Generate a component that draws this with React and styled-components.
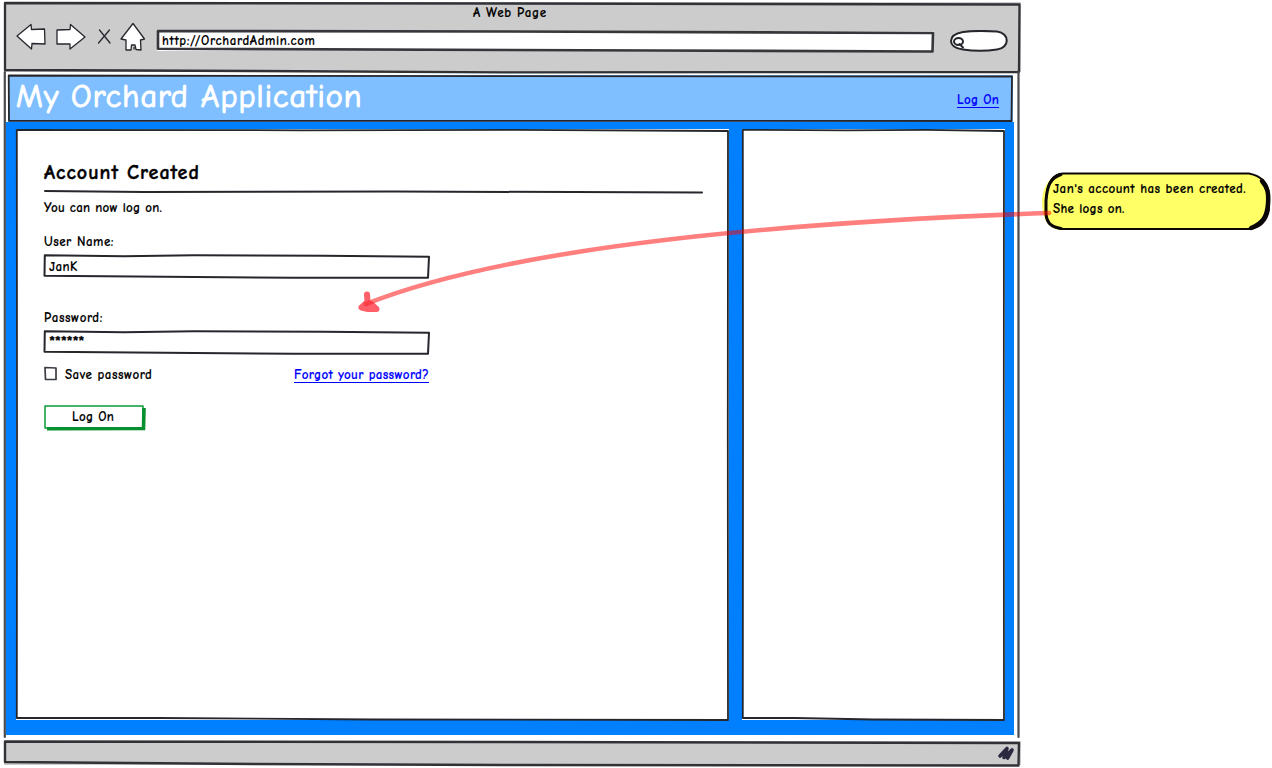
import React from "react";
import styled, { createGlobalStyle } from "styled-components";

const Global = createGlobalStyle`
  * { box-sizing: border-box; }
  html, body { margin: 0; padding: 0; background: #fff; }
  body { width: 1272px; height: 768px; overflow: hidden; color: #000;
    font: 500 13px/16px "Comic Sans MS", "Comic Neue", Lato, "Open Sans", sans-serif; }
`;

const Page = styled.div`
  position: relative;
  display: flex;
  align-items: flex-start;
  gap: 22px;
  width: 1272px;
  height: 768px;
  padding: 2px 0 0 4px;
`;

const Window = styled.main`
  position: relative;
  display: flex;
  flex-direction: column;
  flex: none;
  width: 1017px;
  height: 766px;
`;

const Ink = styled.svg`
  position: absolute;
  left: 0;
  top: 0;
  width: 100%;
  height: 100%;
  overflow: visible;
  pointer-events: none;
  fill: none;
  stroke: ${(p) => p.$color || "#25272c"};
  stroke-width: ${(p) => p.$weight || 2};
  stroke-linejoin: round;
  stroke-linecap: round;
`;

const Label = styled.span`
  display: block;
  width: max-content;
  white-space: pre;
  font-size: ${(p) => p.$size || 13}px;
  line-height: ${(p) => p.$line || 16}px;
  letter-spacing: ${(p) => p.$track || 0}px;
  font-weight: ${(p) => p.$bold || 600};
  color: ${(p) => p.$color || "#000"};
  -webkit-text-stroke: ${(p) => p.$stroke || 0.12}px currentColor;
`;

const Link = styled(Label).attrs({ as: "a", href: "#" })`
  color: #0000ff;
  text-decoration: none;
  border-bottom: 1px solid #0000ff;
  line-height: 14px;
`;

const Chrome = styled.header`
  position: relative;
  display: flex;
  flex-direction: column;
  height: 70px;
  background: #ccc;
`;

const TitleRow = styled.div`
  display: flex;
  padding: 3px 0 0 469px;
  height: 19px;
`;

const Toolbar = styled.div`
  display: flex;
  align-items: flex-start;
  height: 40px;
  padding-left: 12px;
`;

const NavIcons = styled.svg`
  flex: none;
  width: 130px;
  height: 32px;
  margin-right: 11px;
  fill: #fff;
  stroke: #25272c;
  stroke-width: 1.3;
  stroke-linejoin: round;
  stroke-linecap: round;
`;

const Address = styled.div`
  position: relative;
  flex: none;
  width: 777px;
  height: 20px;
  margin: 10px 15px 0 0;
  padding: 2px 0 0 5px;
  background: #fff;
`;

const SearchPill = styled.svg`
  flex: none;
  width: 60px;
  height: 22px;
  margin-top: 9px;
  fill: #fff;
  stroke: #25272c;
  stroke-width: 2;
  stroke-linecap: round;
`;

const Body = styled.section`
  position: relative;
  display: flex;
  flex-direction: column;
  height: 669px;
  padding: 3px 0 0 2px;
`;

const Banner = styled.div`
  position: relative;
  display: flex;
  justify-content: space-between;
  width: 1005px;
  height: 47px;
  margin-left: 2px;
  padding: 0 14px 0 8px;
  background: #80bfff;
`;

const BannerLink = styled.div`
  padding-top: 18px;
`;

const Content = styled.div`
  display: flex;
  gap: 13px;
  width: 1008px;
  height: 613px;
  padding: 7px 10px 16px;
  background: #007fff;
`;

const Panel = styled.div`
  position: relative;
  flex: none;
  width: ${(p) => p.$width}px;
  height: 591px;
  background: #fff;
`;

const MainColumn = styled.div`
  display: flex;
  flex-direction: column;
  align-items: flex-start;
  padding: 32px 0 0 28px;
`;

const Rule = styled.svg`
  width: 660px;
  height: 6px;
  margin: 4px 0 5px;
  fill: none;
  stroke: #25272c;
  stroke-width: 2;
  stroke-linecap: round;
  overflow: visible;
`;

const Field = styled.label`
  display: flex;
  flex-direction: column;
  gap: 5px;
  height: 76px;
`;

const FirstField = styled(Field)`
  margin-top: 18px;
`;

const Input = styled.div`
  position: relative;
  width: 386px;
  height: 24px;
  padding: 4px 0 0 5px;
`;

const Options = styled.div`
  display: flex;
  align-items: flex-start;
  width: 385px;
  height: 38px;
  margin-top: -19px;
`;

const Box = styled.svg`
  flex: none;
  width: 13px;
  height: 14px;
  margin-right: 8px;
  fill: #fff;
  stroke: #3a3c44;
  stroke-width: 1.7;
  stroke-linejoin: round;
  overflow: visible;
`;

const Forgot = styled.div`
  margin: 1px 0 0 auto;
`;

const Button = styled.button`
  position: relative;
  display: flex;
  align-items: flex-start;
  width: 101px;
  height: 25px;
  margin: 0;
  padding: 4px 0 0 28px;
  border: 0;
  background: #fff;
  font: inherit;
  text-align: left;
`;

const Status = styled.footer`
  position: relative;
  height: 24px;
  background: #ccc;
`;

const Note = styled.aside`
  position: relative;
  flex: none;
  width: 227px;
  height: 58px;
  margin-top: 170px;
  padding: 7px 0 0 10px;
`;

const NoteText = styled.div`
  position: relative;
`;

const Pointer = styled(Ink)`
  stroke: #ff0000;
  opacity: 0.5;
`;

const PointerTip = styled(Ink)`
  stroke: #ff2a36;
  opacity: 0.75;
`;

function InputInk() {
  return (
    <Ink $weight={2}>
      <path d="M.8 .2 L80 1.2 L150 .3 L280 .8 L385 1.800 L384 22.800 L250 22.800 L120 21.800 L.5 20.800 Z" />
    </Ink>
  );
}

function PanelInk({ w }) {
  return (
    <Ink $weight={1.8}>
      <path
        d={`M.8 .8 L${w * 0.4} 1.3 L${w * 0.7} .8 L${w - 1} 2 L${w - 1.2} 300 L${w - 1} 591 L${w * 0.5} 590.5 L${w * 0.2} 589 L.8 589 L1 300 Z`}
      />
    </Ink>
  );
}

export default function App() {
  return (
    <>
      <Global />
      <Page>
        <Window>
          <Chrome>
            <TitleRow>
              <Label $track={0.65}>A Web Page</Label>
            </TitleRow>
            <Toolbar>
              <NavIcons viewBox="0 0 130 32">
                <path d="M1 15 L15 3.500 L15.500 8.500 L28.500 8 L29 23 L16 22.500 L15.500 28 Z" />
                <path d="M41 9 L54 8.500 L54.500 3.500 L69 16 L54 28 L54 23 L41 23 Z" />
                <path d="M83.500 9 L94 22 M93.500 9 L82.500 22" />
                <path d="M117 2.500 L128.500 18 L124.500 19 L125 29 L120 28.500 L119 24 L115.500 24 L115 29 L110 29 L110 19 L105 18 Z" />
                <path d="M118 26.500 V28" />
              </NavIcons>
              <Address>
                <Label $track={0.63}>http://OrchardAdmin.com</Label>
                <Ink $weight={2.6} $color="#35373a">
                  <path d="M1 0 L350 .5 L776 2 L775.500 20.500 L500 19.500 L1 17.800 Z" />
                </Ink>
              </Address>
              <SearchPill viewBox="0 0 60 22">
                <path d="M14 2 C25 .5 40 1 48 1.500 C61 3 61 18 48 19.500 C38 21 24 21 14 19.500 C-2 17 -2 5 14 2 Z" />
                <ellipse cx="9.500" cy="11.500" rx="4.500" ry="3.500" />
                <path d="M10.500 14 L14 17.500" />
              </SearchPill>
            </Toolbar>
            <Ink $weight={2.3} $color="#303236">
              <path d="M1 1 L500 1.500 L1015.500 2.500 L1015 70 L500 70.300 L250 69 L1 68 Z" />
            </Ink>
          </Chrome>
          <Body>
            <Banner>
              <Label $size={32} $line={43} $track={1.1} $color="#fff" $stroke={1.1} $bold={500}>
                My Orchard Application
              </Label>
              <BannerLink>
                <Link $track={0.25}>Log On</Link>
              </BannerLink>
              <Ink $weight={1.8}>
                <path d="M.7 .5 L500 1.200 L1004 1.500 L1003.500 46 L1 45.800 Z" />
              </Ink>
            </Banner>
            <Content>
              <Panel $width={713}>
                <MainColumn>
                  <Label $size={20} $line={24} $track={1} $stroke={0.4}>
                    Account Created
                  </Label>
                  <Rule viewBox="0 0 660 6">
                    <path d="M1 2 L100 3 L350 2.500 L658 3.500" />
                  </Rule>
                  <Label $track={0.25}>You can now log on.</Label>
                  <FirstField>
                    <Label $track={0.5}>User Name:</Label>
                    <Input>
                      <Label $track={0.4} $line={15}>JanK</Label>
                      <InputInk />
                    </Input>
                  </FirstField>
                  <Field>
                    <Label $track={0.55}>Password:</Label>
                    <Input>
                      <Label $size={16} $line={14} $track={-0.2} $stroke={0.3}>******</Label>
                      <InputInk />
                    </Input>
                  </Field>
                  <Options>
                    <Box viewBox="0 0 13 14">
                      <path d="M1 .5 L12 1 L12 12.500 L1.500 12.500 Z" />
                    </Box>
                    <Label $track={0.5}>Save password</Label>
                    <Forgot>
                      <Link $track={0.33}>Forgot your password?</Link>
                    </Forgot>
                  </Options>
                  <Button type="button">
                    <Label $track={0.25}>Log On</Label>
                    <Ink $color="#0a9a3a" $weight={1.5}>
                      <path d="M1 1 L99 1 L99 23 L1 23 Z" />
                      <path d="M100 3 L99.500 23.500 L3 23.800" strokeWidth="3.600" strokeLinecap="butt" strokeLinejoin="miter" style={{ stroke: "#06902f", strokeWidth: 3.6 }} />
                    </Ink>
                  </Button>
                </MainColumn>
                <PanelInk w={713} />
              </Panel>
              <Panel $width={263}>
                <PanelInk w={263} />
              </Panel>
            </Content>
            <Ink $color="#4a4b4f" $weight={2.2}>
              <path d="M.8 0 V665 M1014.500 0 V665" />
            </Ink>
          </Body>
          <Status>
            <Ink $weight={2.4} $color="#303236">
              <path d="M1 .5 L500 1 L1015 2 L1014.500 24.500 L500 24 L250 23 L1 21 Z" />
            </Ink>
            <Ink $weight={3.6} $color="#2b2940">
              <path d="M996 15 L1003 7.500 L1000 16.500 L1008 9 L1003.500 17" />
            </Ink>
          </Status>
        </Window>
        <Note>
          <Ink $color="none">
            <path d="M14 2 H208 Q225 5 225 22 V38 Q222 56 205 58 H18 Q3 57 0 40 Q-5 14 14 2 Z" fill="#ffff66" />
          </Ink>
          <Ink $color="#0b0706" $weight={1.8}>
            <path d="M20 1.500 H206 C218 4 225 11 226 22 V38 C224 49 217 56 207 57 H20 C9 56 4 52 3 43 V28 C4 11 9 2 20 1.500 Z" />
          </Ink>
          <Ink $color="#0b0706" $weight={3}>
            <path d="M18 2.500 C7 6 4 14 3 29 V42 C4 52 9 55 18 56.500" />
          </Ink>
          <Ink $color="#0b0706" $weight={4.5}>
            <path d="M219 9 C224 15 226 20 225 32 C224 45 220 51 208 56" />
          </Ink>
          <NoteText>
            <Label $line={19.5} $track={0.45}>Jan's account has been created.</Label>
            <Label $line={19.5} $track={0.3}>She logs on.</Label>
          </NoteText>
        </Note>
        <Pointer viewBox="0 0 1272 768" $weight={4.6}>
          <path d="M1049 213 Q551 230.500 366 304" />
        </Pointer>
        <PointerTip viewBox="0 0 1272 768" $weight={6}>
          <path d="M367 294.500 L367.500 302 L361.500 307.500 L368 309 L376.500 309 L371 304 L366 305" />
        </PointerTip>
      </Page>
    </>
  );
}
